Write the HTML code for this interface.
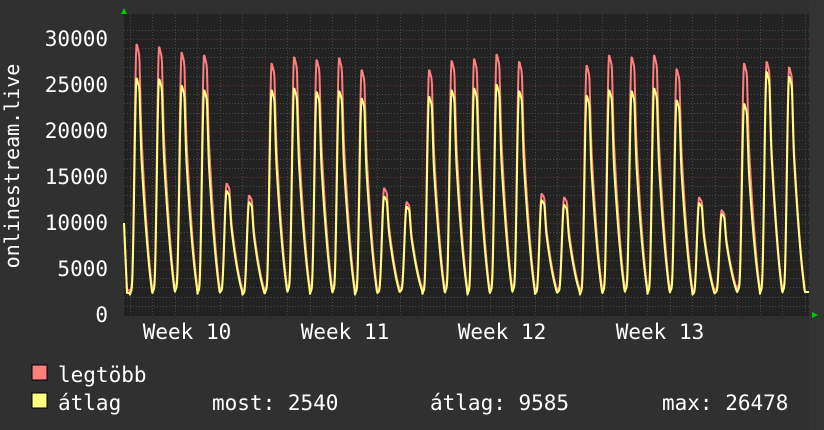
<!DOCTYPE html>
<html><head><meta charset="utf-8"><style>
html,body{margin:0;padding:0;background:#303030;width:824px;height:430px;overflow:hidden}
svg text{font-family:"DejaVu Sans Mono","Liberation Mono",monospace;fill:#fff}
</style></head><body>
<svg id="g" width="824" height="430" xmlns="http://www.w3.org/2000/svg">
<rect x="0" y="0" width="824" height="430" fill="#303030"/>
<rect x="809" y="0" width="15" height="430" fill="#333"/>
<rect x="124" y="14" width="685" height="302" fill="#222"/>
<g id="grid"></g>
<g id="data"></g>
<polygon points="121,14 127,14 124,8" fill="#0c0"/>
<polygon points="812,312 812,318 818,315" fill="#0c0"/>
<g font-size="21" text-anchor="end">
<text x="108" y="46">30000</text>
<text x="108" y="92">25000</text>
<text x="108" y="138">20000</text>
<text x="108" y="184">15000</text>
<text x="108" y="230">10000</text>
<text x="108" y="276">5000</text>
<text x="108" y="322">0</text>
</g>
<g font-size="21" text-anchor="middle">
<text x="187" y="339">Week 10</text>
<text x="345" y="339">Week 11</text>
<text x="502" y="339">Week 12</text>
<text x="660" y="339">Week 13</text>
</g>
<text font-size="20" text-anchor="middle" transform="translate(19,166) rotate(-90)">onlinestream.live</text>
<rect x="32" y="365" width="15" height="15" fill="#ff7f7f" stroke="#000"/>
<rect x="32" y="393" width="15" height="15" fill="#ffff7f" stroke="#000"/>
<g font-size="21">
<text x="58" y="382">legtöbb</text>
<text x="58" y="410">átlag</text>
<text x="212" y="410">most: 2540</text>
<text x="430" y="410">átlag: 9585</text>
<text x="662" y="410">max: 26478</text>
</g>
</svg>
<script>
(function(){
var NS="http://www.w3.org/2000/svg";
var grid=document.getElementById('grid'),data=document.getElementById('data');
function line(x1,y1,x2,y2,c,d){var l=document.createElementNS(NS,'line');l.setAttribute('x1',x1);l.setAttribute('y1',y1);l.setAttribute('x2',x2);l.setAttribute('y2',y2);l.setAttribute('stroke',c);l.setAttribute('stroke-width',1);if(d)l.setAttribute('stroke-dasharray',d);grid.appendChild(l);}
function Y(v){return 315-v*0.0092;}
for(var v=1000;v<=31000;v+=1000){var y=Math.round(Y(v))+0.5;line(124,y,809,y,(v%5000==0)?'#6a3030':'#4a4a4a','1,2');}
for(var k=-1;k<40;k++){var x=107+22.5*k;if(x<125||x>809)continue;var wk=(k%7==0);line(Math.round(x)+0.5,14,Math.round(x)+0.5,316,wk?'#6a3030':'#4a4a4a','1,2');}
var mx=[29500,29200,28600,28300,14300,13000,27400,28100,27800,28000,26700,13800,12300,26700,27700,27900,28400,27600,13200,12800,27200,28300,28100,28300,26800,12800,11400,27400,27600,27000];
var av=[25800,25700,25000,24500,13500,12300,24500,24700,24300,24400,23600,12900,11800,23800,24500,24700,25100,24400,12500,12000,23900,24500,24400,24700,23400,12200,11000,23000,26500,26000];
function ease(u){return 0.5-0.5*Math.cos(Math.PI*u);}
function f(s){
 if(s<0.06){return 0.02*s/0.06;}
 if(s<0.3){var u=(s-0.06)/0.24;return 0.02+0.98*Math.pow(ease(u),1.2);}
 if(s<0.42){return 1-(s-0.3)*0.4;}
 if(s<0.5){var u=(s-0.42)/0.08;return 0.95-0.3*u;}
 var u=(s-0.5)/0.5; return 0.65*(1-u)*(1-u*0.45)/(1)*(1) ;
}
function build(arr,minv){var p=[];for(var x=124;x<=809;x+=0.5){var d=(x-129.5)/22.5-0.02;var i=Math.floor(d);var s=d-i;var v;
 if(i<0){v=x<127?10000-(x-124)*2500:minv+200;}else if(i>=arr.length){v=2500;}else{var mn=minv+((i*37)%5)*80;v=mn+(arr[i]-mn)*f(s);}
 p.push(x+','+Y(v).toFixed(1));}return p.join(' ');}
function pl(pts,c){var e=document.createElementNS(NS,'polyline');e.setAttribute('points',pts);e.setAttribute('fill','none');e.setAttribute('stroke',c);e.setAttribute('stroke-width',2);e.setAttribute('stroke-linejoin','round');data.appendChild(e);}
pl(build(mx,2500),'#ff7f7f');pl(build(av,2200),'#ffff7f');
})();
</script>
</body></html>
